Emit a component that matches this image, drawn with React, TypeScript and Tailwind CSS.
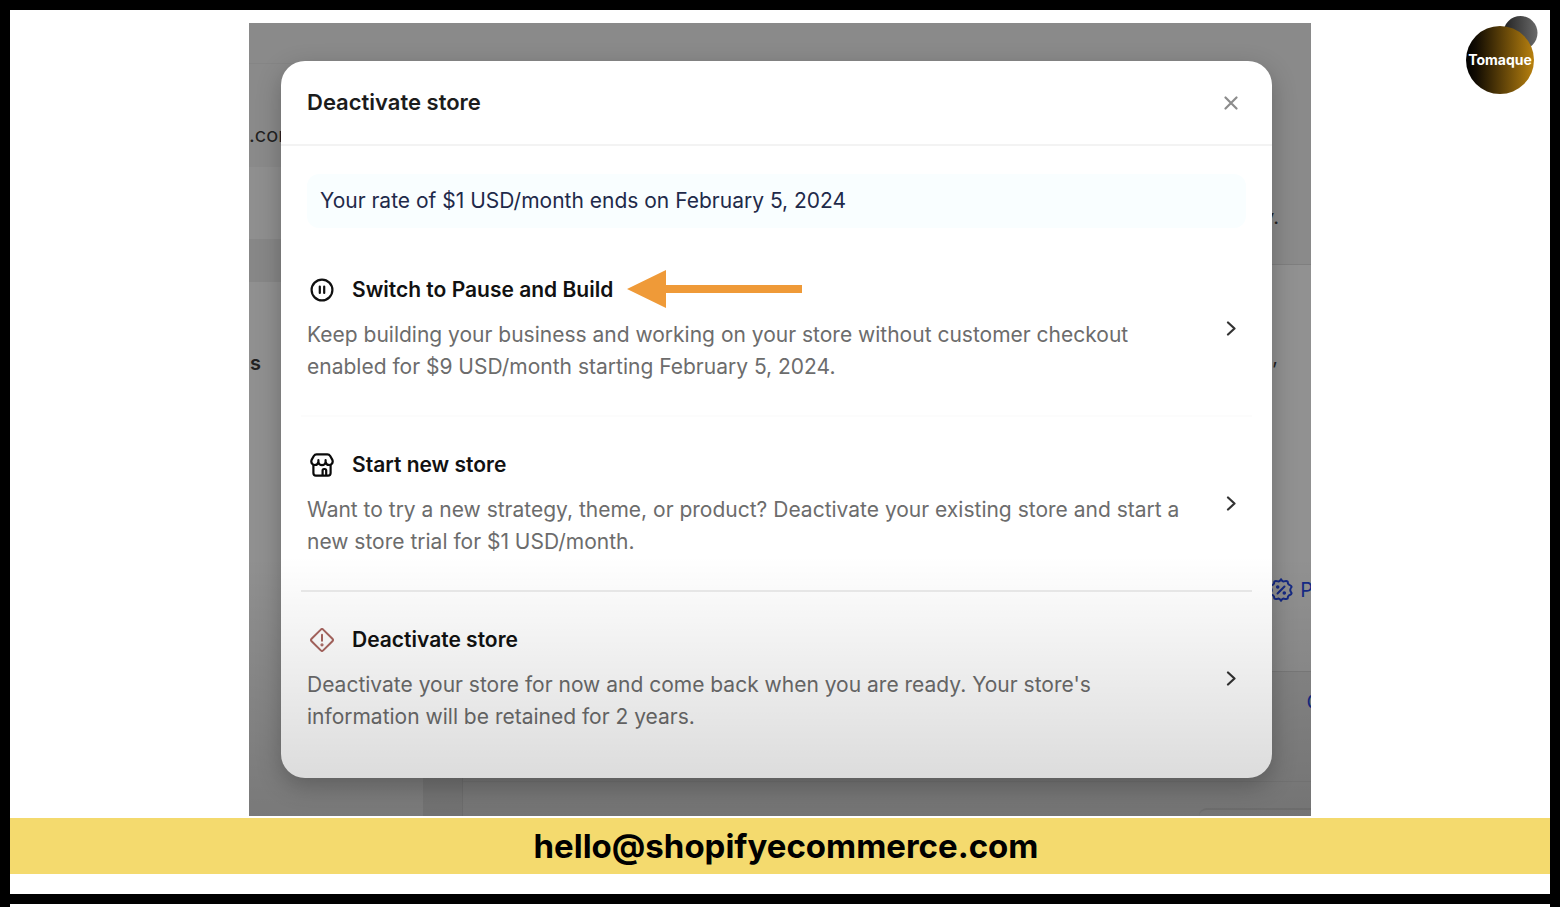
import type { ReactNode } from 'react'

const PauseIcon = () => (
  <svg viewBox="0 0 24 24" className="h-6 w-6" fill="none" stroke="#111" strokeWidth="2.2" strokeLinecap="round">
    <circle cx="12" cy="12" r="10.4" />
    <path d="M9.8 8.6v6.4M14.2 8.6v6.4" />
  </svg>
)

const StoreIcon = () => (
  <svg viewBox="0 0 24 24" className="h-6 w-6" fill="none" stroke="#0a0a0a" strokeWidth="2.2" strokeLinecap="round" strokeLinejoin="round">
    <path d="M6.6 1.4h10.8c1.2 0 2.2.6 2.8 1.6l1.9 3.4c.4.7.6 1.4.6 2.2a3.5 3.5 0 0 1-3.500 3.400 3.600 3.600 0 0 1-3.600-3.400V7.200v1.400a3.600 3.600 0 0 1-7.200 0V7.200v1.400A3.600 3.600 0 0 1 4.800 12a3.500 3.500 0 0 1-3.500-3.400c0-.8.200-1.500.6-2.200L3.800 3c.6-1 1.600-1.600 2.800-1.600Z" />
    <path d="M3.400 12v8c0 1.600 1 2.600 2.600 2.600h12c1.600 0 2.600-1 2.600-2.600v-8" />
    <path d="M12.600 22v-4.600c0-.8.600-1.400 1.400-1.400h.8c.8 0 1.400.6 1.400 1.400V22" />
  </svg>
)

const AlertIcon = () => (
  <svg viewBox="0 0 24 24" className="h-6 w-6" fill="none" stroke="#a8655f" strokeWidth="2" strokeLinecap="round" strokeLinejoin="round">
    <path d="M10.8 1.6 1.6 10.8a1.7 1.7 0 0 0 0 2.400l9.200 9.200a1.700 1.700 0 0 0 2.400 0l9.200-9.200a1.700 1.700 0 0 0 0-2.400L13.200 1.600a1.700 1.700 0 0 0-2.400 0Z" />
    <path d="M12 6.800v6" />
    <circle cx="12" cy="16.8" r=".6" fill="#a8655f" />
  </svg>
)

const DiscountIcon = () => (
  <svg viewBox="0 0 24 24" className="h-6 w-6" fill="none" stroke="currentColor" strokeWidth="2" strokeLinecap="round" strokeLinejoin="round">
    <path d="M12 1.200Q13.200 3.600 14.800 3.400Q17.400 2.400 18.600 3.400Q18.700 5.600 19.800 6.600Q22.600 7.600 22.600 9Q21.200 10.800 21.200 12Q21.200 13.200 22.600 15Q22.600 16.400 19.800 17.400Q18.700 18.400 18.600 20.600Q17.400 21.600 14.800 20.600Q13.200 20.400 12 22.800Q10.800 20.400 9.200 20.600Q6.600 21.600 5.400 20.600Q5.300 18.400 4.200 17.400Q1.400 16.400 1.400 15Q2.800 13.200 2.800 12Q2.800 10.800 1.400 9Q1.400 7.600 4.200 6.600Q5.300 5.600 5.400 3.400Q6.600 2.400 9.200 3.400Q10.800 3.600 12 1.200Z" />
    <path d="m8.500 15.500 7-7" />
    <circle cx="8.700" cy="9" r=".8" fill="currentColor" />
    <circle cx="15.300" cy="15" r=".8" fill="currentColor" />
  </svg>
)

const Chevron = () => (
  <svg viewBox="0 0 10 16" className="h-4 w-[10px] shrink-0" fill="none" stroke="#333" strokeWidth="2.2" strokeLinecap="round" strokeLinejoin="round">
    <path d="m2 1.500 6.500 6L2 13.500" />
  </svg>
)

const Arrow = () => (
  <svg viewBox="0 0 176 40" className="-my-1 h-10 w-[176px]" fill="#ef9a38">
    <path d="M0 19 39 0v15h136v8H39v15Z" />
  </svg>
)

interface Option {
  title: string
  lines: [string, string]
  icon: ReactNode
  marked?: boolean
  divider: string
}

const options: Option[] = [
  {
    title: 'Switch to Pause and Build',
    lines: [
      'Keep building your business and working on your store without customer checkout',
      'enabled for $9 USD/month starting February 5, 2024.',
    ],
    icon: <PauseIcon />,
    marked: true,
    divider: 'border-b-2 border-[#fcfcfc] pb-8',
  },
  {
    title: 'Start new store',
    lines: [
      'Want to try a new strategy, theme, or product? Deactivate your existing store and start a',
      'new store trial for $1 USD/month.',
    ],
    icon: <StoreIcon />,
    divider: 'border-b-2 border-[#ebebeb] pb-8',
  },
  {
    title: 'Deactivate store',
    lines: [
      'Deactivate your store for now and come back when you are ready. Your store\'s',
      'information will be retained for 2 years.',
    ],
    icon: <AlertIcon />,
    divider: 'pb-[45px]',
  },
]

const OptionRow = ({ option }: { option: Option }) => (
  <button type="button" className={`flex w-full items-center justify-between pt-8 pr-4 pl-[6px] text-left ${option.divider}`}>
    <span className="block">
      <span className="flex h-8 items-center pl-[3px]">
        {option.icon}
        <span className="ml-[18px] text-[21px] font-semibold text-[#111]">{option.title}</span>
        {option.marked && <span className="ml-[14px]"><Arrow /></span>}
      </span>
      <span className="mt-[13px] block text-[21px] leading-8 text-[#6c6c6c]">
        {option.lines[0]}
        <br />
        {option.lines[1]}
      </span>
    </span>
    <Chevron />
  </button>
)

// Dimmed admin page that peeks out around the dialog
const Backdrop = () => (
  <div className="absolute inset-0 flex overflow-hidden bg-[#868686] text-[20px] leading-6 text-[#222]">
    <div className="flex w-[174px] flex-col">
      <div className="h-[41px] border-b border-[#858585] bg-[#8a8a8a]" />
      <div className="h-[103px] bg-[#8a8a8a] pt-[59px]">.com</div>
      <div className="h-[72px] bg-[#8f8f8f]" />
      <div className="h-[43px] bg-[#878787]" />
      <div className="grow bg-[#909090] pt-[69px] pl-px font-semibold">s</div>
    </div>
    <div className="flex w-10 flex-col">
      <div className="h-[144px] bg-[#8a8a8a]" />
      <div className="grow border-r border-[#7f7f7f]" />
    </div>
    <div className="flex grow flex-col bg-[#8a8a8a]">
      <div className="h-[241px] pt-[182px] pr-8 text-right">y.</div>
      <div className="-mr-[2px] flex h-[410px] flex-col items-end border-y border-[#7f7f7f] bg-[#919191] pt-20">
        <div className="pr-[35px]">,</div>
        <div className="mt-[209px] flex items-center gap-[7px] text-[#152a86]">
          <DiscountIcon />
          <span>P</span>
        </div>
      </div>
      <div className="-mr-[10px] h-[110px] pt-[18px] text-right text-[#152a86]">C</div>
      <div className="h-[27px] border-t border-[#838383]" />
      <div className="h-2 w-28 self-end rounded-tl-lg border-t-2 border-[#808080]" />
    </div>
  </div>
)

const Dialog = () => (
  <div role="dialog" aria-labelledby="dialog-title" className="relative rounded-3xl bg-white shadow-[0_8px_24px_rgba(0,0,0,0.25)]">
    <div className="flex h-[85px] items-center justify-between border-b-2 border-[#f3f3f3] pr-[34px] pl-[26px]">
      <h1 id="dialog-title" className="text-[22px] font-semibold text-[#1c1c1c]">Deactivate store</h1>
      <button type="button" aria-label="Close">
        <svg viewBox="0 0 16 16" className="h-4 w-4" fill="none" stroke="#8c8c8c" strokeWidth="2.2" strokeLinecap="round">
          <path d="m3.500 2.500 11 11M14.500 2.500l-11 11" />
        </svg>
      </button>
    </div>
    <p className="mx-[26px] mt-7 mb-[14px] rounded-xl bg-[#f9feff] px-[13px] py-[11px] text-[21px] leading-8 text-[#1f2a4a]">
      Your rate of $1 USD/month ends on February 5, 2024
    </p>
    <div className="px-5">
      {options.map(option => (
        <OptionRow key={option.title} option={option} />
      ))}
    </div>
  </div>
)

const Logo = () => (
  <div className="absolute top-[6px] right-3 flex h-[78px] w-[72px]">
    <svg viewBox="0 0 72 78" className="absolute inset-0 h-full w-full">
      <defs>
        <linearGradient id="gold">
          <stop offset="0" stopColor="#000" />
          <stop offset="0.15" stopColor="#120c02" />
          <stop offset="1" stopColor="#b8810f" />
        </linearGradient>
        <linearGradient id="smoke">
          <stop offset="0" stopColor="#222" />
          <stop offset="1" stopColor="#6a6a6a" />
        </linearGradient>
      </defs>
      <circle cx="54.5" cy="17" r="17" fill="url(#smoke)" />
      <circle cx="34" cy="44" r="34" fill="url(#gold)" />
    </svg>
    <span className="relative w-[68px] pt-[34px] text-center text-[14px] leading-5 font-bold text-white">Tomaque</span>
  </div>
)

const App = () => {
  return (
    <div className="flex min-h-screen flex-col border-x-10 border-black bg-white pb-[3px] font-['Inter',sans-serif]">
      <div className="relative flex grow flex-col border-y-10 border-black pt-[13px] pb-5">
        <Logo />
        <main className="relative mx-auto mb-[2px] w-full max-w-[1062px] overflow-hidden pt-[38px] pr-[39px] pb-[38px] pl-8">
          <Backdrop />
          <Dialog />
          <div className="pointer-events-none absolute inset-x-0 bottom-0 h-[260px] bg-linear-to-b from-black/0 to-black/16" />
        </main>
        <footer className="flex h-14 items-center justify-center bg-[#f4da6e] pl-3">
          <a href="mailto:hello@shopifyecommerce.com" className="text-[33px] leading-10 font-bold text-black">
            hello@shopifyecommerce.com
          </a>
        </footer>
      </div>
    </div>
  )
}

export default App
